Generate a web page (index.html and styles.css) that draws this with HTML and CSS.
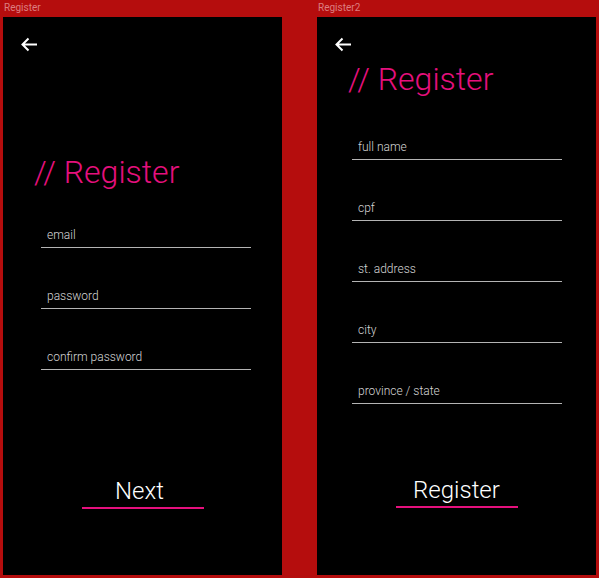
FILE: index.html
```html
<!DOCTYPE html>
<html>
<head>
<meta charset="utf-8">
<link rel="stylesheet" href="styles.css">
</head>
<body>
<div class="board">
  <section class="artboard first">
    <div class="art-label">Register</div>
    <div class="screen">
      <div class="back">
        <svg width="18" height="15" viewBox="0 0 18 15"><path d="M17 7.5H2.5M8.5 1.5L2.5 7.5L8.5 13.5" fill="none" stroke="#fff" stroke-width="2"/></svg>
      </div>
      <h1 class="title t1">// Register</h1>
      <div class="fields f1">
        <div class="field">email</div>
        <div class="field">password</div>
        <div class="field">confirm password</div>
      </div>
      <div class="btn b1"><span class="btn-text">Next</span></div>
    </div>
  </section>
  <section class="artboard second">
    <div class="art-label">Register2</div>
    <div class="screen">
      <div class="back">
        <svg width="18" height="15" viewBox="0 0 18 15"><path d="M17 7.5H2.5M8.5 1.5L2.5 7.5L8.5 13.5" fill="none" stroke="#fff" stroke-width="2"/></svg>
      </div>
      <h1 class="title t2">// Register</h1>
      <div class="fields f2">
        <div class="field">full name</div>
        <div class="field">cpf</div>
        <div class="field">st. address</div>
        <div class="field">city</div>
        <div class="field">province / state</div>
      </div>
      <div class="btn b2"><span class="btn-text">Register</span></div>
    </div>
  </section>
</div>
</body>
</html>
```
FILE: styles.css
```css
html, body {
  margin: 0;
  padding: 0;
  background: #b50d0d;
  height: 578px;
  overflow: hidden;
}
body {
  font-family: Roboto, "Liberation Sans", sans-serif;
}
.board {
  display: flex;
  padding-left: 3px;
  gap: 35px;
}
.artboard {
  display: flex;
  flex-direction: column;
  width: 279px;
}
.art-label {
  height: 17px;
  font-size: 10px;
  line-height: 17px;
  color: #dc7d80;
  padding-left: 1px;
  margin-top: -1px;
  margin-bottom: 1px;
}
.screen {
  background: #000;
  height: 558px;
  display: flex;
  flex-direction: column;
}
.back {
  margin-top: 20px;
  margin-left: 17px;
  height: 15px;
  line-height: 0;
}
.title {
  margin: 0;
  margin-left: 31px;
  font-weight: 300;
  font-size: 32px;
  line-height: 38px;
  color: #e5107d;
  white-space: nowrap;
}
.t1 { margin-top: 101px; }
.t2 { margin-top: 8px; }
.fields {
  display: flex;
  flex-direction: column;
  gap: 41px;
  width: 210px;
}
.f1 { margin-left: 38px; margin-top: 37px; }
.f2 { margin-left: 35px; margin-top: 42px; }
.field {
  font-size: 12px;
  line-height: 14px;
  font-weight: 300;
  color: #d6d6d6;
  padding-left: 6px;
  padding-bottom: 5px;
  border-bottom: 1px solid #b4b4b4;
}
.btn {
  align-self: center;
  width: 122px;
  text-align: center;
  border-bottom: 2px solid #e5107d;
  padding-bottom: 2px;
}
.b1 { margin-top: 107px; }
.b2 { margin-top: 72px; }
.b1 .btn-text { padding-right: 6px; }
.btn-text {
  font-size: 24px;
  line-height: 28px;
  font-weight: 300;
  color: #fff;
}
```
